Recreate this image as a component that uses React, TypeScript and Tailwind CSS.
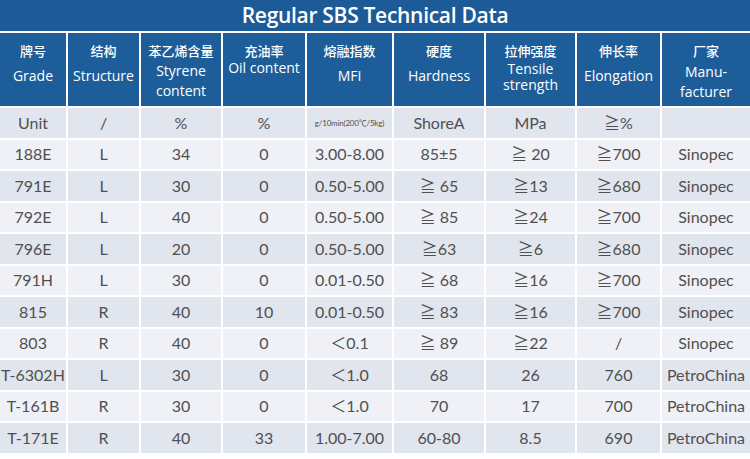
import * as React from "react";

// column widths measured from the sheet (2px white rules between)
const COLS = "grid-cols-[66px_71px_80px_82px_85px_90px_89px_83px_88px]";

interface Row {
  grade: string;
  structure: string;
  styrene: string;
  oil: string;
  mfi: string;
  hardness: string;
  tensile: string;
  elongation: string;
  maker: string;
}

const rows: Row[] = [
  { grade: "188E", structure: "L", styrene: "34", oil: "0", mfi: "3.00-8.00", hardness: "85±5", tensile: "≧ 20", elongation: "≧700", maker: "Sinopec" },
  { grade: "791E", structure: "L", styrene: "30", oil: "0", mfi: "0.50-5.00", hardness: "≧ 65", tensile: "≧13", elongation: "≧680", maker: "Sinopec" },
  { grade: "792E", structure: "L", styrene: "40", oil: "0", mfi: "0.50-5.00", hardness: "≧ 85", tensile: "≧24", elongation: "≧700", maker: "Sinopec" },
  { grade: "796E", structure: "L", styrene: "20", oil: "0", mfi: "0.50-5.00", hardness: "≧63", tensile: "≧6", elongation: "≧680", maker: "Sinopec" },
  { grade: "791H", structure: "L", styrene: "30", oil: "0", mfi: "0.01-0.50", hardness: "≧ 68", tensile: "≧16", elongation: "≧700", maker: "Sinopec" },
  { grade: "815", structure: "R", styrene: "40", oil: "10", mfi: "0.01-0.50", hardness: "≧ 83", tensile: "≧16", elongation: "≧700", maker: "Sinopec" },
  { grade: "803", structure: "R", styrene: "40", oil: "0", mfi: "＜0.1", hardness: "≧ 89", tensile: "≧22", elongation: "/", maker: "Sinopec" },
  { grade: "T-6302H", structure: "L", styrene: "30", oil: "0", mfi: "＜1.0", hardness: "68", tensile: "26", elongation: "760", maker: "PetroChina" },
  { grade: "T-161B", structure: "R", styrene: "30", oil: "0", mfi: "＜1.0", hardness: "70", tensile: "17", elongation: "700", maker: "PetroChina" },
  { grade: "T-171E", structure: "R", styrene: "40", oil: "33", mfi: "1.00-7.00", hardness: "60-80", tensile: "8.5", elongation: "690", maker: "PetroChina" },
];

const font = "font-['Lato','Noto_Sans_CJK_SC',sans-serif]";

function Head({ zh, en, enClass }: { zh: string; en: string[]; enClass: string }) {
  return (
    <div className="flex flex-col items-center bg-[#1d5d9a] pt-[9px] text-white">
      <span className="text-[13px] font-medium leading-[18px] font-['Noto_Sans_CJK_SC',sans-serif]">{zh}</span>
      <div className={`flex flex-col items-center font-['Open_Sans',sans-serif] text-[14px] font-medium ${enClass}`}>
        {en.map((l) => (
          <span key={l}>{l}</span>
        ))}
      </div>
    </div>
  );
}

function Cell({ children, bg }: { children: React.ReactNode; bg: string }) {
  return (
    <div className={`flex items-center justify-center ${bg} whitespace-nowrap text-[16px] text-[#505050]`}>
      {children}
    </div>
  );
}

export default function App() {
  return (
    <div className={`flex h-[459px] w-[750px] flex-col gap-[2px] bg-white ${font}`}>
      {/* Title bar */}
      <div className="flex h-[31px] items-center justify-center bg-[#1c5b98]">
        <h1 className="font-['Open_Sans',sans-serif] text-[21px] font-semibold tracking-[-0.3px] text-white">
          Regular SBS Technical Data
        </h1>
      </div>

      <div className={`grid ${COLS} grid-rows-[73px] auto-rows-[29.5px] gap-[2px]`}>
        <Head zh="牌号" en={["Grade"]} enClass="mt-[6px] leading-[20px]" />
        <Head zh="结构" en={["Structure"]} enClass="mt-[6px] leading-[20px]" />
        <Head zh="苯乙烯含量" en={["Styrene", "content"]} enClass="mt-[1px] leading-[20px]" />
        <Head zh="充油率" en={["Oil content"]} enClass="mt-0 leading-[16px]" />
        <Head zh="熔融指数" en={["MFI"]} enClass="mt-[6px] leading-[20px]" />
        <Head zh="硬度" en={["Hardness"]} enClass="mt-[6px] leading-[20px]" />
        <Head zh="拉伸强度" en={["Tensile", "strength"]} enClass="mt-[1px] leading-[16px]" />
        <Head zh="伸长率" en={["Elongation"]} enClass="mt-[6px] leading-[20px]" />
        <Head zh="厂家" en={["Manu-", "facturer"]} enClass="mt-[2px] leading-[20px]" />

        {/* Unit row */}
        <Cell bg="bg-[#e1e5ee]">Unit</Cell>
        <Cell bg="bg-[#e1e5ee]">/</Cell>
        <Cell bg="bg-[#e1e5ee]">%</Cell>
        <Cell bg="bg-[#e1e5ee]">%</Cell>
        <Cell bg="bg-[#e1e5ee]">
          <span className="text-[8px] tracking-[-0.2px]">g/10min(200℃/5kg)</span>
        </Cell>
        <Cell bg="bg-[#e1e5ee]">ShoreA</Cell>
        <Cell bg="bg-[#e1e5ee]">MPa</Cell>
        <Cell bg="bg-[#e1e5ee]">≧%</Cell>
        <Cell bg="bg-[#e1e5ee]">{""}</Cell>

        {rows.map((r, i) => {
          const bg = i % 2 === 0 ? "bg-[#eff1f6]" : "bg-[#e1e5ee]";
          return (
            <React.Fragment key={r.grade}>
              <Cell bg={bg}>{r.grade}</Cell>
              <Cell bg={bg}>{r.structure}</Cell>
              <Cell bg={bg}>{r.styrene}</Cell>
              <Cell bg={bg}>{r.oil}</Cell>
              <Cell bg={bg}>{r.mfi}</Cell>
              <Cell bg={bg}>{r.hardness}</Cell>
              <Cell bg={bg}>{r.tensile}</Cell>
              <Cell bg={bg}>{r.elongation}</Cell>
              <Cell bg={bg}>{r.maker}</Cell>
            </React.Fragment>
          );
        })}
      </div>
    </div>
  );
}
